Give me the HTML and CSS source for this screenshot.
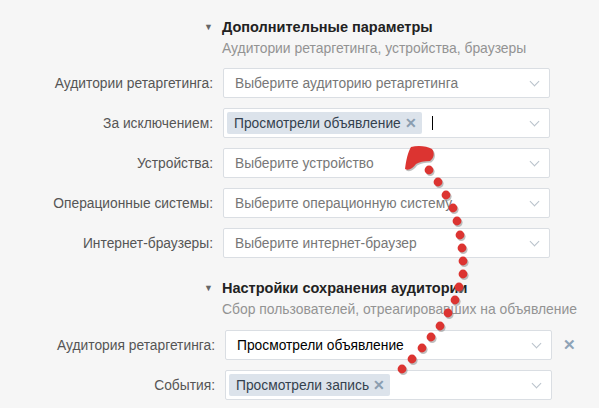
FILE: index.html
```html
<!DOCTYPE html>
<html>
<head>
	<meta charset="utf-8">
	<title>Настройки таргетинга</title>
	<link rel="stylesheet" href="styles.css">
</head>
<body>
<div class="page">

	<div class="group">
		<div class="group-head">
			<span class="toggle">&#9660;</span>
			<div>
				<h3>Дополнительные параметры</h3>
				<p>Аудитории ретаргетинга, устройства, браузеры</p>
			</div>
		</div>
		<div class="row">
			<label>Аудитории ретаргетинга:</label>
			<div class="select"><span class="placeholder">Выберите аудиторию ретаргетинга</span><i class="chevron"></i></div>
		</div>
		<div class="row">
			<label>За исключением:</label>
			<div class="select select-tags">
				<span class="chip">Просмотрели объявление <b class="chip-x">&#10005;</b></span>
				<span class="caret"></span>
				<i class="chevron"></i>
			</div>
		</div>
		<div class="row">
			<label>Устройства:</label>
			<div class="select"><span class="placeholder">Выберите устройство</span><i class="chevron"></i></div>
		</div>
		<div class="row">
			<label>Операционные системы:</label>
			<div class="select"><span class="placeholder">Выберите операционную систему</span><i class="chevron"></i></div>
		</div>
		<div class="row">
			<label>Интернет-браузеры:</label>
			<div class="select"><span class="placeholder">Выберите интернет-браузер</span><i class="chevron"></i></div>
		</div>
	</div>

	<div class="group group-save">
		<div class="group-head">
			<span class="toggle">&#9660;</span>
			<div>
				<h3>Настройки сохранения аудитории</h3>
				<p>Сбор пользователей, отреагировавших на объявление</p>
			</div>
		</div>
		<div class="row">
			<label>Аудитория ретаргетинга:</label>
			<div class="select"><span class="value">Просмотрели объявление</span><i class="chevron"></i></div>
			<span class="remove">&#10005;</span>
		</div>
		<div class="row">
			<label>События:</label>
			<div class="select select-tags">
				<span class="chip">Просмотрели запись <b class="chip-x">&#10005;</b></span>
				<i class="chevron"></i>
			</div>
		</div>
	</div>

	<!-- пометка поверх формы -->
	<svg class="arrow-mark" width="599" height="408" viewBox="0 0 599 408">
		<g fill="#8c8c8c" opacity="0.55" transform="translate(1.2 1.6)">
			<path d="M405,169 C406,160 408,152 411,147 C418,145 427,146 432,149 C435,153 434,158 430,161 C424,161 419,162 416,164 C413,168 409,171 405,169 Z"/>
			<circle cx="429" cy="170" r="4.4"/><circle cx="438" cy="182" r="4.4"/><circle cx="446" cy="195" r="4.4"/>
			<circle cx="453" cy="208" r="4.4"/><circle cx="457" cy="221" r="4.4"/><circle cx="460" cy="235" r="4.4"/>
			<circle cx="462" cy="248" r="4.4"/><circle cx="463" cy="261" r="4.4"/><circle cx="463" cy="274" r="4.4"/>
			<circle cx="459" cy="287" r="4.4"/><circle cx="455" cy="300" r="4.4"/><circle cx="448" cy="313" r="4.4"/>
			<circle cx="440" cy="326" r="4.4"/><circle cx="431" cy="337" r="4.4"/><circle cx="422" cy="348" r="4.4"/>
			<circle cx="412" cy="359" r="4.4"/><circle cx="402" cy="369" r="4.4"/>
		</g>
		<g fill="#dc3431">
			<path d="M405,169 C406,160 408,152 411,147 C418,145 427,146 432,149 C435,153 434,158 430,161 C424,161 419,162 416,164 C413,168 409,171 405,169 Z"/>
			<circle cx="429" cy="170" r="4.4"/><circle cx="438" cy="182" r="4.4"/><circle cx="446" cy="195" r="4.4"/>
			<circle cx="453" cy="208" r="4.4"/><circle cx="457" cy="221" r="4.4"/><circle cx="460" cy="235" r="4.4"/>
			<circle cx="462" cy="248" r="4.4"/><circle cx="463" cy="261" r="4.4"/><circle cx="463" cy="274" r="4.4"/>
			<circle cx="459" cy="287" r="4.4"/><circle cx="455" cy="300" r="4.4"/><circle cx="448" cy="313" r="4.4"/>
			<circle cx="440" cy="326" r="4.4"/><circle cx="431" cy="337" r="4.4"/><circle cx="422" cy="348" r="4.4"/>
			<circle cx="412" cy="359" r="4.4"/><circle cx="402" cy="369" r="4.4"/>
		</g>
	</svg>
</div>
</body>
</html>
```

FILE: styles.css
```css
*{ margin: 0; padding: 0; box-sizing: border-box; }
body{
	background: #f6f6f6;
	font-family: "Liberation Sans", Arial, sans-serif;
	font-size: 13.8px;
	color: #222;
}
.page{
	position: relative; /* для пометки */
	width: 599px; height: 408px;
	padding-top: 17px;
	overflow: hidden;
}
.group-head{
	display: grid;
	grid-template-columns: 213px auto;
	column-gap: 9px;
	margin-bottom: 11px;
}
.toggle{
	text-align: right;
	font-size: 9px;
	line-height: 20px;
	color: #666;
}
.group-head h3{
	font-size: 14.5px; line-height: 20px;
	font-weight: bold;
	color: #222;
}
.group-head p{
	margin-top: 2px;
	font-size: 13.9px; line-height: 18px;
	color: #939393;
}
.row{
	display: grid;
	grid-template-columns: 213px 327px auto;
	column-gap: 10px;
	align-items: center;
	height: 30px;
	margin-bottom: 10px;
}
.row label{
	text-align: right;
	color: #555;
}
.group-save{ margin-top: 20px; }
.group-save .group-head{ margin-bottom: 12px; }
.group-save .row{ grid-template-columns: 215px 327px auto; }

.select{
	display: flex;
	align-items: center;
	height: 30px;
	background: #fff;
	border: 1px solid #dadee3;
	border-radius: 2px;
	padding: 0 9px 0 11px;
}
.select-tags{ padding-left: 3px; }
.placeholder{ color: #777; flex: 1; white-space: nowrap; overflow: hidden; }
.value{ color: #000; flex: 1; }
.chip{
	display: flex;
	align-items: center;
	height: 22px;
	padding: 0 5px 0 7px;
	background: #dce3eb;
	border-radius: 2px;
	color: #34414e;
	white-space: nowrap;
}
.chip-x{
	margin-left: 4px;
	font-size: 14px;
	line-height: 1;
	color: #8a9db0;
}
.caret{
	width: 1px; height: 14px;
	background: #000;
	margin-left: 10px;
}
.chevron{
	margin-left: auto;
	width: 7px; height: 7px;
	border-right: 1px solid #b9c2cb;
	border-bottom: 1px solid #b9c2cb;
	transform: rotate(45deg);
	margin-top: -4px;
	margin-right: 2px;
}
.remove{
	color: #8ea3b7;
	font-size: 15px;
	font-weight: bold;
	padding-left: 1px;
}
.arrow-mark{
	position: absolute; left: 0; top: 0;
	pointer-events: none;
}
```
